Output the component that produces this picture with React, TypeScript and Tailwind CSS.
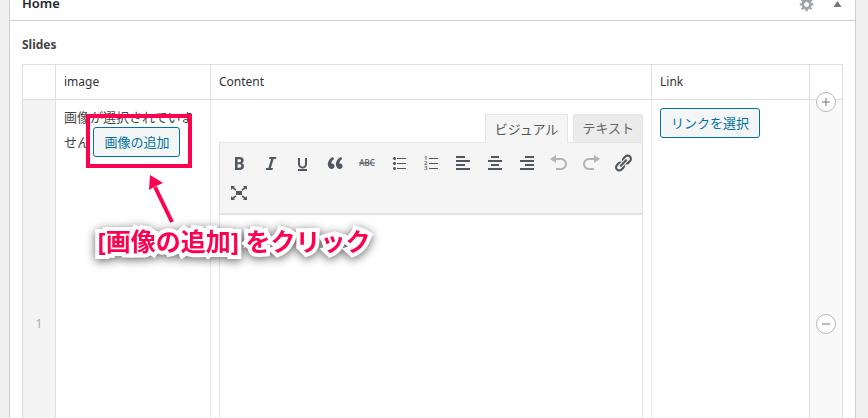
import type { ReactNode } from "react";

type Tool = { label: string; icon: ReactNode; disabled?: boolean };

const tools: Tool[] = [
  {
    label: "太字",
    icon: <path d="M6 4v13h4.54c1.37 0 2.46-.33 3.26-1 .8-.66 1.2-1.58 1.2-2.77 0-.84-.17-1.51-.51-2.01s-.9-.85-1.67-1.03v-.09c.57-.1 1.02-.4 1.36-.9s.51-1.13.51-1.91c0-1.14-.39-1.98-1.17-2.5C12.75 4.26 11.5 4 9.78 4H6zm2.57 5.15V6.26h1.36c.73 0 1.27.11 1.61.32.34.22.51.58.51 1.07 0 .54-.16.92-.47 1.15s-.82.35-1.51.35h-1.5zm0 2.19h1.6c1.44 0 2.16.53 2.16 1.61 0 .6-.17 1.05-.51 1.34s-.86.43-1.57.43H8.57v-3.38z" />,
  },
  { label: "イタリック", icon: <path d="M14.78 6h-2.13l-2.8 9h2.12l-.62 2H4.6l.62-2h2.14l2.8-9H8.03l.62-2h6.75z" /> },
  {
    label: "下線",
    icon: <path d="M14 5h-2v5.71c0 1.99-1.12 2.98-2.45 2.98-1.32 0-2.55-1-2.55-2.96V5H5v5.87c0 1.91 1 4.54 4.48 4.54 3.49 0 4.52-2.58 4.52-4.5V5zm0 13v-2H5v2h9z" />,
  },
  {
    label: "引用",
    icon: <path d="M9.49 13.22c0-.74-.2-1.38-.61-1.9-.62-.78-1.83-.88-2.53-.72-.29-1.65 1.11-3.75 2.92-4.65L7.88 4c-2.73 1.3-5.42 4.28-4.96 8.05C3.21 14.43 4.59 16 6.54 16c.85 0 1.56-.25 2.12-.75s.83-1.18.83-2.03zm8.05 0c0-.74-.2-1.38-.61-1.9-.63-.78-1.83-.88-2.53-.72-.29-1.65 1.11-3.75 2.92-4.65L15.93 4c-2.73 1.3-5.41 4.28-4.95 8.05.29 2.38 1.66 3.95 3.61 3.95.85 0 1.56-.25 2.12-.75s.83-1.18.83-2.03z" />,
  },
  {
    label: "打ち消し線",
    icon: (
      <>
        <text x="10" y="13" textAnchor="middle" fontSize="8" fontWeight="500">ABC</text>
        <path d="M2 9.5h16v1H2z" />
      </>
    ),
  },
  {
    label: "箇条書き",
    icon: <path d="M5.5 7C4.67 7 4 6.33 4 5.5 4 4.68 4.67 4 5.5 4 6.32 4 7 4.68 7 5.5 7 6.33 6.32 7 5.5 7zM8 5h9v1H8V5zm-2.5 7c-.83 0-1.5-.67-1.5-1.5C4 9.68 4.67 9 5.5 9c.82 0 1.5.68 1.5 1.5 0 .83-.68 1.5-1.5 1.5zM8 10h9v1H8v-1zm-2.5 7c-.83 0-1.5-.67-1.5-1.5 0-.82.67-1.5 1.5-1.5.82 0 1.5.68 1.5 1.5 0 .83-.68 1.5-1.5 1.5zM8 15h9v1H8v-1z" />,
  },
  {
    label: "番号付きリスト",
    icon: (
      <>
        <g fontSize="6" fontWeight="600">
          <text x="3" y="7">1</text>
          <text x="3" y="12">2</text>
          <text x="3" y="17">3</text>
        </g>
        <path d="M8 5h9v1H8zM8 10h9v1H8zM8 15h9v1H8z" />
      </>
    ),
  },
  { label: "左寄せ", icon: <path d="M12 5V3H3v2h9zm5 4V7H3v2h14zm-5 4v-2H3v2h9zm5 4v-2H3v2h14z" /> },
  { label: "中央揃え", icon: <path d="M14 5V3H6v2h8zm3 4V7H3v2h14zm-3 4v-2H6v2h8zm3 4v-2H3v2h14z" /> },
  { label: "右寄せ", icon: <path d="M17 5V3H8v2h9zm0 4V7H3v2h14zm0 4v-2H8v2h9zm0 4v-2H3v2h14z" /> },
  {
    label: "取り消し",
    disabled: true,
    icon: <path d="M12 5H7V2L1 6l6 4V7h5c2.2 0 4 1.8 4 4s-1.8 4-4 4H7v2h5c3.3 0 6-2.7 6-6s-2.7-6-6-6z" />,
  },
  {
    label: "やり直し",
    disabled: true,
    icon: <path d="M8 5h5V2l6 4-6 4V7H8c-2.2 0-4 1.8-4 4s1.8 4 4 4h5v2H8c-3.3 0-6-2.7-6-6s2.7-6 6-6z" />,
  },
  {
    label: "リンクの挿入",
    icon: <path d="M17.74 2.76c1.68 1.69 1.68 4.41 0 6.1l-1.53 1.52c-1.12 1.12-2.7 1.47-4.14 1.09l2.62-2.61.76-.77.76-.76c.84-.84.84-2.2 0-3.04-.84-.85-2.2-.85-3.04 0l-.77.76-3.38 3.38c-.37-1.44-.02-3.02 1.1-4.14l1.52-1.53c1.69-1.68 4.42-1.68 6.1 0zM8.59 13.43l5.34-5.34c.42-.42.42-1.1 0-1.52-.44-.43-1.13-.39-1.53 0l-5.33 5.34c-.42.42-.42 1.1 0 1.52.44.43 1.13.39 1.52 0zm-.76 2.29l4.14-4.15c.38 1.44.03 3.02-1.09 4.14l-1.52 1.53c-1.69 1.68-4.41 1.68-6.1 0-1.68-1.68-1.68-4.42 0-6.1l1.53-1.52c1.12-1.12 2.7-1.47 4.14-1.1l-4.14 4.15c-.85.84-.85 2.2 0 3.05.84.84 2.2.84 3.04 0z" />,
  },
  {
    label: "フルスクリーン",
    icon: <path d="M7 8h6v4H7zM2 3h4L4.8 4.2l2.7 2.4-1.2 1.2-2.9-2.4L2 7zM18 3h-4l1.2 1.2-2.7 2.4 1.2 1.2 2.9-2.4L18 7zM2 17h4l-1.2-1.2 2.7-2.4-1.2-1.2-2.9 2.4L2 13zM18 17h-4l1.2-1.2-2.7-2.4 1.2-1.2 2.9 2.4L18 13z" />,
  },
];

function Editor() {
  return (
    <div>
      <div className="flex justify-end gap-[5px]">
        <button className="relative z-10 -mb-px h-[29px] border border-b-0 border-[#e5e5e5] bg-[#f5f5f5] px-[9px] text-[#555]">
          ビジュアル
        </button>
        <button className="h-7 border border-b-0 border-[#e5e5e5] bg-[#ebebeb] px-2 text-[#666]">
          テキスト
        </button>
      </div>
      <div className="border border-[#e5e5e5]">
        <div className="relative flex flex-wrap border-b border-[#ddd] bg-[#f5f5f5] px-[3px] py-[5px] shadow-[0_1px_1px_rgba(0,0,0,0.1)]">
          {tools.map((tool) => (
            <button
              key={tool.label}
              aria-label={tool.label}
              disabled={tool.disabled}
              className="flex h-[30px] w-8 items-center justify-center text-[#50575e] disabled:opacity-40"
            >
              <svg viewBox="0 0 20 20" className="size-5 fill-current">{tool.icon}</svg>
            </button>
          ))}
        </div>
        <textarea aria-label="Content" className="block h-80 w-full resize-none bg-white p-2 outline-none" />
      </div>
    </div>
  );
}

export default function App() {
  return (
    <main className="h-screen overflow-hidden bg-[#f0f0f0] pr-3 pl-[9px] font-['Noto_Sans','Noto_Sans_CJK_JP',sans-serif] text-[13px] leading-[19px] text-[#444]">
      <section className="border-x border-[#ccd0d4] bg-white">
        <header className="flex h-[21px] items-end justify-between border-b border-[#ccd0d4] px-3">
          <h2 className="h-[26px] font-semibold text-[#23282d]">Home</h2>
          <div className="flex items-center gap-[18px] pb-2">
            <button aria-label="設定" className="text-[#a0a5aa]">
              <svg viewBox="0 0 20 20" className="size-4 fill-current">
                <path d="M18 12h-2.18c-.17.7-.44 1.35-.81 1.93l1.54 1.54-2.1 2.1-1.54-1.54c-.58.36-1.23.63-1.91.79V19H8v-2.18c-.68-.16-1.33-.43-1.91-.79l-1.54 1.54-2.12-2.12 1.54-1.54c-.36-.58-.63-1.23-.79-1.91H1V9.03h2.17c.16-.7.44-1.35.8-1.94L2.43 5.55l2.1-2.1 1.54 1.54c.58-.37 1.24-.64 1.93-.81V2h3v2.18c.68.16 1.33.43 1.91.79l1.54-1.54 2.12 2.12-1.54 1.54c.36.59.64 1.24.8 1.94H18V12zm-8.5 1.5c1.66 0 3-1.34 3-3s-1.34-3-3-3-3 1.34-3 3 1.34 3 3 3z" />
              </svg>
            </button>
            <button aria-label="閉じる" className="text-[#72777c]">
              <svg viewBox="0 0 10 6" className="h-[6px] w-[10px] fill-current">
                <path d="M4.500 0l4 6h-8z" />
              </svg>
            </button>
          </div>
        </header>

        <div className="px-3 pt-[14px]">
          <h3 className="mb-[9px] text-xs leading-5 font-bold">Slides</h3>

          <table className="w-full table-fixed border-collapse border border-[#dfdfdf]">
            <colgroup>
              <col className="w-[33px]" />
              <col className="w-[155px]" />
              <col />
              <col className="w-[158px]" />
              <col className="w-[33px]" />
            </colgroup>
            <thead>
              <tr className="h-[35px] text-left text-xs text-[#333]">
                <th className="border border-[#dfdfdf]" />
                <th className="border border-[#dfdfdf] px-2 font-normal">image</th>
                <th className="border border-[#dfdfdf] px-2 font-normal">Content</th>
                <th className="border border-[#dfdfdf] px-2 font-normal">Link</th>
                <th className="border border-[#dfdfdf]" />
              </tr>
            </thead>
            <tbody>
              <tr className="h-[448px]">
                <td className="border border-[#dfdfdf] bg-[#f4f4f4] text-center text-xs text-[#aaa]">1</td>
                <td className="border-r border-[#ededed] p-2 align-top">
                  画像が選択されていません{" "}
                  <span className="relative inline-block">
                    <button className="h-[30px] rounded-[3px] border border-[#0071a1] bg-[#f3f5f6] px-[10px] text-[#0071a1]">
                      画像の追加
                    </button>
                    {/* Callout around the button */}
                    <span className="pointer-events-none absolute -top-[13px] -right-3 -bottom-[11px] -left-[7px] border-4 border-[#ff0050]" />
                    <svg viewBox="0 0 30 50" className="absolute top-12 left-[53px] h-[50px] w-[30px] overflow-visible">
                      <path d="M26 47L9 12" stroke="#ff0050" strokeWidth="4" />
                      <path d="M4 0L17 8L10 11L3 15z" fill="#ff0050" />
                    </svg>
                    <strong className="absolute top-[98px] left-1 z-20 text-[25px] leading-8 font-bold whitespace-nowrap text-[#ff0050] [paint-order:stroke_fill] [-webkit-text-stroke:8px_white] drop-shadow-[0_2px_5px_rgba(0,0,0,0.6)]">
                      [画像の追加] をクリック
                    </strong>
                  </span>
                </td>
                <td className="border-r border-[#ededed] px-2 pt-[14px] align-top">
                  <Editor />
                </td>
                <td className="p-2 align-top">
                  <button className="h-[30px] rounded-[3px] border border-[#0071a1] bg-[#f3f5f6] px-[10px] text-[#0071a1]">
                    リンクを選択
                  </button>
                </td>
                <td className="relative border border-[#dfdfdf] bg-[#f9f9f9]">
                  <button
                    aria-label="行を追加"
                    className="absolute -top-2 left-[6px] flex size-5 items-center justify-center rounded-full border border-[#b4b9be] bg-white text-[#72777c]"
                  >
                    <svg viewBox="0 0 10 10" className="size-[10px] fill-current">
                      <path d="M4.500 1h1v3.500H9v1H5.500V9h-1V5.500H1v-1h3.500z" />
                    </svg>
                  </button>
                  <button
                    aria-label="行を削除"
                    className="mx-auto flex size-5 items-center justify-center rounded-full border border-[#b4b9be] bg-white text-[#72777c]"
                  >
                    <svg viewBox="0 0 10 10" className="size-[10px] fill-current">
                      <path d="M1 4.500h8v1H1z" />
                    </svg>
                  </button>
                </td>
              </tr>
            </tbody>
          </table>
        </div>
      </section>
    </main>
  );
}
